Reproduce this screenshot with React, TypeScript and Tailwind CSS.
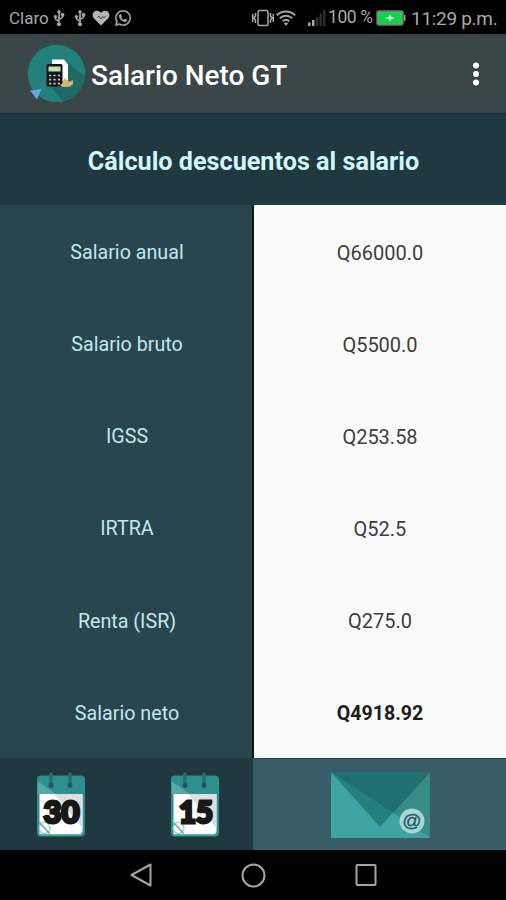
import { FaUsb, FaWhatsapp } from 'react-icons/fa';

const rows = [
  { label: 'Salario anual', value: 'Q66000.0' },
  { label: 'Salario bruto', value: 'Q5500.0' },
  { label: 'IGSS', value: 'Q253.58' },
  { label: 'IRTRA', value: 'Q52.5' },
  { label: 'Renta (ISR)', value: 'Q275.0' },
  { label: 'Salario neto', value: 'Q4918.92', bold: true },
];

function StatusBar() {
  return (
    <div className="flex h-[34px] items-center justify-between bg-black pl-[9px] pr-[11px] pt-[2px] text-[#a8a8a8]">
      <div className="flex items-center">
        <span className="w-[40px] whitespace-nowrap text-[17px] leading-none">Claro</span>
        <FaUsb className="ml-[2px] h-[16px] w-[16px] -rotate-90" stroke="currentColor" strokeWidth={30} />
        <FaUsb className="ml-[5px] h-[16px] w-[16px] -rotate-90" stroke="currentColor" strokeWidth={30} />
        <svg className="ml-[4px]" width="18" height="16" viewBox="0 0 18 16">
          <path d="M9 15.5 2 8.6C-1 5 1.2.8 5 .8c1.800 0 3.200 1 4 2.200C9.800 1.800 11.200.8 13 .8c3.800 0 6 4.200 3 7.800z" fill="#b5b5b5" />
          <path d="M5.500 7.500 7 6l2 3 1.500-2.500L12 8l1.500-2" fill="none" stroke="#444" strokeWidth="1" />
        </svg>
        <FaWhatsapp className="ml-[4px] h-[18px] w-[18px]" stroke="currentColor" strokeWidth={10} />
      </div>
      <div className="flex items-center">
        <svg width="22" height="18" viewBox="0 0 22 18" fill="none" stroke="#a8a8a8" strokeWidth="1.500">
          <rect x="6" y="1.500" width="10" height="15" rx="1.500" />
          <path d="M3.500 4v3l-1.500 2 1.500 2v3M18.500 4v3l1.500 2-1.500 2v3M.7 5v8M21.300 5v8" />
        </svg>
        <svg className="ml-[2px]" width="20" height="16" viewBox="0 0 20 16" fill="none" stroke="#a8a8a8" strokeWidth="1.900">
          <path d="M.8 5.200c5.200-5 13.200-5 18.400 0M3.800 8.300c3.600-3.400 8.800-3.400 12.400 0M6.700 11.300c2-1.800 4.600-1.800 6.600 0" />
          <path d="M10 15.800 7.700 13.200q2.300-1.600 4.600 0z" fill="#a8a8a8" stroke="none" />
        </svg>
        <svg className="ml-[12px]" width="18" height="16" viewBox="0 0 18 16">
          <path d="M0 12.500h2.500V16H0zM4 10h2.500v6H4z" fill="#a8a8a8" />
          <path d="M8 7h2.500v9H8zM11.500 3.500H14V16h-2.500zM15 0h2.500v16H15z" fill="#2c2c2c" />
        </svg>
        <span className="ml-[2px] w-[45px] whitespace-nowrap text-[17.5px] leading-none tracking-[-0.4px]">100 %</span>
        <svg className="ml-[3px]" width="30" height="16" viewBox="0 0 30 16">
          <rect x="1" y="1" width="26" height="14" rx="2" fill="#19cf52" stroke="#777" strokeWidth="1.500" />
          <path d="M28 5h1.500v6H28z" fill="#999" />
          <path d="m9 8 4-.9V5.500h2v1.600l4 .9-4 .9v1.600h-2V8.900z" fill="#e9ffe9" />
        </svg>
        <span className="ml-[5px] w-[84px] whitespace-nowrap text-[19px] leading-none tracking-[-0.3px]">11:29 p.m.</span>
      </div>
    </div>
  );
}

function AppLogo() {
  return (
    <svg width="60" height="62" viewBox="0 0 60 62">
      <defs>
        <clipPath id="logo-disc">
          <circle cx="29.500" cy="30.500" r="28.800" />
        </clipPath>
      </defs>
      <circle cx="29.500" cy="30.500" r="28.800" fill="#23807d" />
      <path d="m40 19 22 17v26H39L23 43h16z" fill="#216967" clipPath="url(#logo-disc)" />
      <path d="M25 16.500h12l4 5v19H25z" fill="#fff" />
      <path d="m32 42 4-4 2-3 4 4 4-2v4l-3 2-7 1z" fill="#d3b574" />
      <rect x="19.500" y="21" width="16" height="22.500" rx="1.500" fill="#15161c" />
      <rect x="21.500" y="23.500" width="12" height="5" fill="#bfe4ae" />
      <path d="M22 32.500h2.200M26.400 32.500h2.200M30.800 32.500h2.200M22 36.700h2.200M26.400 36.700h2.200M30.800 36.700h2.200M22 40.700h2.200M26.400 40.700h2.200M30.800 40.700h2.200" stroke="#d7c5c9" strokeWidth="1.700" />
      <path d="m33 42.500 4-3.500 3-2 3 2.500 3-1v2.500l-3 2.500-7 .5z" fill="#d3b574" />
      <path d="m3 47.500 11.500-1.500-4.500 10.500z" fill="#5fa9df" />
    </svg>
  );
}

function CalendarIcon({ day }: { day: string }) {
  return (
    <svg width="50" height="66" viewBox="0 0 50 66">
      <rect x="1" y="3.500" width="48" height="61" rx="4" fill="#2f8f8d" />
      <path d="M1.500 9v13h18z" fill="#55aaa7" />
      <path d="M3.500 22h43V60l-2 2.500h-41z" fill="#fff" />
      <path d="m18 22 28.500 34V22z" fill="#dedede" />
      <path d="M3.500 63h42" stroke="#49aaa7" strokeWidth="1.500" />
      <path d="M15 2v12M34 2v12" stroke="#21706c" strokeWidth="3.500" strokeLinecap="round" />
      <circle cx="15" cy="13.500" r="2.400" fill="#1d5558" />
      <circle cx="34" cy="13.500" r="2.400" fill="#1d5558" />
      <circle cx="8.500" cy="56" r="5.500" fill="#fff" stroke="#86c8c3" strokeWidth="1.200" />
      <path d="m3.500 50.500 10 11" stroke="#5caaa5" strokeWidth="1.400" />
      <text
        x={day === '30' ? 25.5 : 26}
        y="50.500"
        textAnchor="middle"
        textLength={day === '30' ? 36 : 34}
        lengthAdjust="spacingAndGlyphs"
        className="font-['Lato'] text-[31px] font-black"
        fill="#171717"
        stroke="#171717"
        strokeWidth="3"
      >
        {day}
      </text>
    </svg>
  );
}

function MailIcon() {
  return (
    <svg className="ml-[2px]" width="99" height="66" viewBox="0 0 99 66">
      <path d="M0 0h99v66H0z" fill="#41a4a4" />
      <path d="M0 0h99v66z" fill="#398d89" />
      <path d="M0 0h99L49 55z" fill="#247f7d" />
      <path d="M0 0h99L62.500 41z" fill="#20706f" />
      <circle cx="81" cy="49" r="12.500" fill="#a6d5d8" />
      <text x="81" y="54.500" textAnchor="middle" className="font-['Liberation_Sans'] text-[19px]" fill="#235c63" stroke="#235c63" strokeWidth=".3">
        @
      </text>
    </svg>
  );
}

export default function App() {
  return (
    <div className="flex h-[900px] w-[506px] flex-col overflow-hidden bg-black font-['Roboto',sans-serif]">
      <StatusBar />

      <header className="flex h-[79px] items-center bg-[#3b4648] pl-[27px] pr-[24px]">
        <AppLogo />
        <h1 className="ml-[4px] mt-[4px] text-[27.9px] font-medium whitespace-nowrap text-white">Salario Neto GT</h1>
        <svg className="ml-auto" width="12" height="28" viewBox="0 0 12 28" fill="#fff" stroke="#1e282a" strokeWidth="1">
          <circle cx="6" cy="5.500" r="3.700" />
          <circle cx="6" cy="14" r="3.700" />
          <circle cx="6" cy="22.500" r="3.700" />
        </svg>
      </header>

      <div className="flex h-[92px] items-center justify-center border-t-2 border-[#1b3038] bg-[#20383f] pt-[3px] pl-px">
        <h2 className="text-[25.2px] font-bold whitespace-nowrap text-[#d0f7fb]">Cálculo descuentos al salario</h2>
      </div>

      <main className="flex h-[553px]">
        <div className="flex w-[252px] flex-col bg-[#29464e]">
          {rows.map((row) => (
            <div key={row.label} className="flex flex-1 items-center justify-center pl-[2px] pt-[3px] text-[19.7px] text-[#c3e6ec]">
              {row.label}
            </div>
          ))}
        </div>
        <div className="flex flex-1 flex-col border-l-2 border-[#0b171b] bg-[#fafafa]">
          {rows.map((row) => (
            <div
              key={row.label}
              className={`flex flex-1 items-center justify-center pt-[3px] ${row.bold ? 'text-[19.6px] font-bold text-[#1c1c1c]' : 'text-[20px] text-[#3d3d3d]'}`}
            >
              {row.value}
            </div>
          ))}
        </div>
      </main>

      <div className="flex h-[92px]">
        <div className="flex w-[253px] items-start bg-[#20383f] pl-[36px] pt-[14px]">
          <CalendarIcon day="30" />
          <div className="ml-[84px]">
            <CalendarIcon day="15" />
          </div>
        </div>
        <div className="flex flex-1 items-start justify-center border-t border-[#1d4550] bg-[#395d67] pt-[13px]">
          <MailIcon />
        </div>
      </div>

      <nav className="flex h-[50px] items-center pl-[130px]">
        <svg width="22" height="24" viewBox="0 0 22 24" fill="none" stroke="#a5a5a5" strokeWidth="2">
          <path d="M20.500 1.500v21L1.500 12z" strokeLinejoin="round" />
        </svg>
        <svg className="ml-[89px]" width="25" height="25" viewBox="0 0 25 25" fill="none" stroke="#a5a5a5" strokeWidth="2">
          <circle cx="12.500" cy="12.500" r="11" />
        </svg>
        <svg className="ml-[89px]" width="22" height="24" viewBox="0 0 22 24" fill="none" stroke="#a5a5a5" strokeWidth="2">
          <rect x="1.500" y="2" width="19" height="20" rx=".8" />
        </svg>
      </nav>
    </div>
  );
}
